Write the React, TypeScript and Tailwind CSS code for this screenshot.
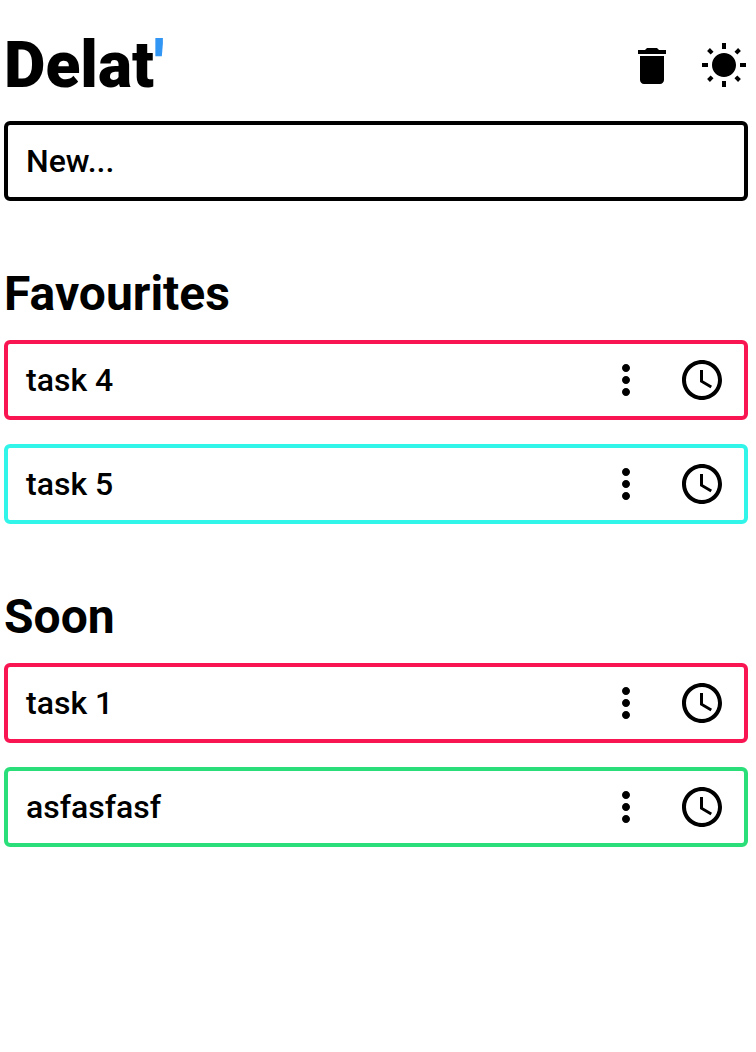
import React from "react";

function Trash() {
  return (
    <svg viewBox="0 0 24 24" className="h-12 w-12" fill="currentColor">
      <path d="M6 19c0 1.1.9 2 2 2h8c1.1 0 2-.9 2-2V7H6v12zM19 4h-3.500l-1-1h-5l-1 1H5v2h14V4z" />
    </svg>
  );
}

function Sun() {
  return (
    <svg viewBox="0 0 24 24" className="h-12 w-12" fill="currentColor">
      <path d="M6.760 4.840l-1.800-1.790-1.410 1.410 1.790 1.790 1.420-1.410zM4 10.500H1v2h3v-2zm9-9.950h-2V3.500h2V.55zm7.450 3.910l-1.410-1.410-1.790 1.790 1.410 1.410 1.790-1.790zm-3.210 13.700l1.790 1.800 1.410-1.410-1.800-1.790-1.400 1.400zM20 10.500v2h3v-2h-3zm-8-5c-3.310 0-6 2.690-6 6s2.690 6 6 6 6-2.690 6-6-2.690-6-6-6zm-1 16.950h2V19.500h-2v2.950zm-7.450-3.910l1.410 1.410 1.790-1.800-1.410-1.410-1.790 1.800z" />
    </svg>
  );
}

function Dots() {
  return (
    <svg viewBox="0 0 24 24" className="h-12 w-12" fill="currentColor">
      <path d="M12 8c1.100 0 2-.9 2-2s-.9-2-2-2-2 .9-2 2 .9 2 2 2zm0 2c-1.100 0-2 .9-2 2s.9 2 2 2 2-.9 2-2-.9-2-2-2zm0 6c-1.100 0-2 .9-2 2s.9 2 2 2 2-.9 2-2-.9-2-2-2z" />
    </svg>
  );
}

function Clock() {
  return (
    <svg viewBox="0 0 24 24" className="h-12 w-12" fill="currentColor">
      <path d="M11.990 2C6.470 2 2 6.480 2 12s4.470 10 9.990 10C17.520 22 22 17.520 22 12S17.520 2 11.990 2zM12 20c-4.420 0-8-3.580-8-8s3.580-8 8-8 8 3.580 8 8-3.580 8-8 8zm.5-13H11v6l5.250 3.150.75-1.230-4.500-2.670z" />
    </svg>
  );
}

function Task({ name, border }: { name: string; border: string }) {
  return (
    <li className={`flex h-20 items-center rounded-md border-4 px-[18px] ${border}`}>
      <span className="flex-1 text-[32px] leading-10 font-medium">{name}</span>
      <div className="flex gap-7">
        <button aria-label="More"><Dots /></button>
        <button aria-label="Schedule"><Clock /></button>
      </div>
    </li>
  );
}

function Section({ title, children }: { title: string; children: React.ReactNode }) {
  return (
    <section>
      <h2 className="mb-[18px] text-[48px] leading-14 font-bold">{title}</h2>
      <ul className="flex flex-col gap-6">{children}</ul>
    </section>
  );
}

export default function App() {
  return (
    <main className="min-h-screen bg-white pt-7 pr-2 pl-1 font-['Roboto',sans-serif] text-black">
      <header className="flex h-[76px] items-center justify-between">
        <h1 className="text-[64px] leading-[76px] font-black">
          Delat<span className="text-[#3296f5]">'</span>
        </h1>
        <div className="flex gap-6">
          <button aria-label="Delete"><Trash /></button>
          <button aria-label="Light theme"><Sun /></button>
        </div>
      </header>
      <input
        aria-label="New task"
        placeholder="New..."
        className="mt-[17px] block h-20 w-full rounded-md border-4 border-black px-[18px] text-[32px] font-medium placeholder:text-black placeholder:opacity-100 focus:outline-none"
      />
      <div className="mt-[65px] flex flex-col gap-[65px]">
        <Section title="Favourites">
          <Task name="task 4" border="border-[#f91551]" />
          <Task name="task 5" border="border-[#30f5e8]" />
        </Section>
        <Section title="Soon">
          <Task name="task 1" border="border-[#f91551]" />
          <Task name="asfasfasf" border="border-[#2adf79]" />
        </Section>
      </div>
    </main>
  );
}
